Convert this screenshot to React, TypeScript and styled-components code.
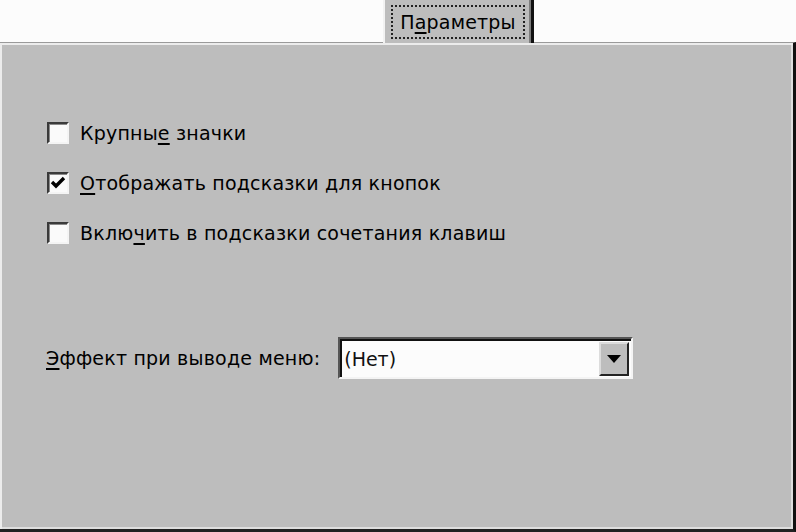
import React from "react";
import styled, { createGlobalStyle } from "styled-components";

const Global = createGlobalStyle`
  html, body {
    margin: 0;
    padding: 0;
    background: #fcfcfc;
    overflow: hidden;
  }
  #root {
    width: 796px;
    height: 532px;
  }
`;

const Window = styled.div`
  width: 796px;
  height: 532px;
  display: flex;
  flex-direction: column;
  font-family: "DejaVu Sans", "Liberation Sans", sans-serif;
  font-size: 19px;
  color: #000;
`;

const TabStrip = styled.div`
  height: 42px;
  display: flex;
  padding-left: 383px;
  background: #fcfcfc;
`;

const Tab = styled.div`
  width: 151px;
  height: 43px;
  margin-bottom: -1px;
  background: #bdbdbd;
  border-left: 2px solid #f2f2f2;
  border-right: 3px solid #111;
  box-shadow: inset -2px 0 0 #7c7c7c;
  position: relative;
  z-index: 1;
  display: flex;
  justify-content: center;
  padding-top: 5px;
  box-sizing: border-box;
`;

const Focus = styled.div`
  height: 30px;
  padding: 0 7px;
  border: 2px dotted #222;
  display: flex;
  align-items: center;
`;

const Panel = styled.div`
  flex: 1;
  background: #bdbdbd;
  border-top: 1px solid #9a9a9a;
  border-right: 3px solid #111;
  border-bottom: 3px solid #222;
  box-shadow: inset 2px 2px 0 #ececec, inset -2px -2px 0 #dedede;
  padding: 65px 0 0 46px;
  display: flex;
  flex-direction: column;
`;

const CheckRow = styled.div`
  height: 50px;
  display: flex;
  align-items: center;
  gap: 11px;
`;

const Box = styled.div`
  width: 22px;
  height: 22px;
  box-sizing: border-box;
  margin-left: 1px;
  background: #fafafa;
  border-top: 2px solid #3a3a3a;
  border-left: 2px solid #3a3a3a;
  border-right: 2px solid #f4f4f4;
  border-bottom: 2px solid #f4f4f4;
  box-shadow: inset 1px 1px 0 #8a8a8a;
  display: flex;
  align-items: center;
  justify-content: center;
`;

const Label = styled.span`
  white-space: nowrap;
  letter-spacing: 0.2px;
`;

const U = styled.span`
  text-decoration: underline;
  text-underline-offset: 3px;
  text-decoration-thickness: 2px;
`;

const EffectRow = styled.div`
  margin-top: 79px;
  display: flex;
  align-items: center;
  gap: 18px;
`;

const Combo = styled.div`
  width: 295px;
  height: 42px;
  box-sizing: border-box;
  background: #fcfcfc;
  border-top: 2px solid #555;
  border-left: 2px solid #555;
  border-right: 2px solid #f4f4f4;
  border-bottom: 2px solid #f4f4f4;
  box-shadow: inset 2px 2px 0 #111;
  display: flex;
  align-items: center;
  padding: 2px 2px 0 4px;
`;

const ComboText = styled.span`
  flex: 1;
  color: #111;
`;

const DropButton = styled.div`
  width: 30px;
  height: 34px;
  box-sizing: border-box;
  background: #bdbdbd;
  border-top: 2px solid #dcdcdc;
  border-left: 2px solid #dcdcdc;
  border-right: 2px solid #222;
  border-bottom: 2px solid #222;
  display: flex;
  align-items: center;
  justify-content: center;
`;

const Check = () => (
  <svg width="16" height="16" viewBox="0 0 16 16">
    <path d="M2 7 L6 11 L14 3" stroke="#000" strokeWidth="3.4" fill="none" />
  </svg>
);

const Arrow = () => (
  <svg width="14" height="8" viewBox="0 0 14 8">
    <path d="M0 0 H14 L7 8 Z" fill="#000" />
  </svg>
);

export default function App() {
  return (
    <Window>
      <Global />
      <TabStrip>
        <Tab>
          <Focus>
            <Label>
              П<U>а</U>раметры
            </Label>
          </Focus>
        </Tab>
      </TabStrip>
      <Panel>
        <CheckRow>
          <Box />
          <Label>
            Крупны<U>е</U> значки
          </Label>
        </CheckRow>
        <CheckRow>
          <Box>
            <Check />
          </Box>
          <Label>
            <U>О</U>тображать подсказки для кнопок
          </Label>
        </CheckRow>
        <CheckRow>
          <Box />
          <Label>
            Вклю<U>ч</U>ить в подсказки сочетания клавиш
          </Label>
        </CheckRow>
        <EffectRow>
          <Label>
            <U>Э</U>ффект при выводе меню:
          </Label>
          <Combo>
            <ComboText>(Нет)</ComboText>
            <DropButton>
              <Arrow />
            </DropButton>
          </Combo>
        </EffectRow>
      </Panel>
    </Window>
  );
}
